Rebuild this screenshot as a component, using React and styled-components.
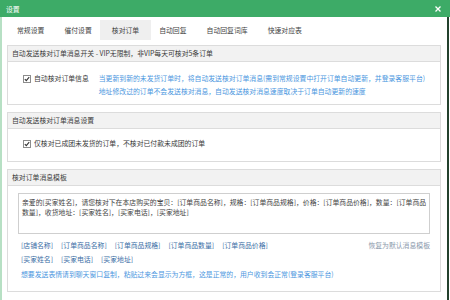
import styled, { createGlobalStyle } from "styled-components";

const GlobalStyle = createGlobalStyle`
  html, body {
    margin: 0;
    padding: 0;
    background: #fff;
  }
  body {
    font-family: "Noto Sans CJK SC", "Noto Sans", sans-serif;
  }
`;

const Window = styled.div`
  width: 450px;
  height: 300px;
  overflow: hidden;
  background: #fff;
  font-size: 6.85px;
  color: #3a3a3a;
`;

const TitleBar = styled.div`
  height: 17px;
  background: #3dab67;
  color: #fff;
  display: flex;
  align-items: center;
  justify-content: space-between;
  padding: 0 9px 0 6px;
`;

const Frame = styled.div`
  height: 283px;
  margin-right: 1px;
  border-left: 2px solid #b7e0c4;
  border-right: 2px solid #23412d;
`;

const TabBar = styled.div`
  height: 25px;
  display: flex;
  align-items: center;
  padding-left: 5px;
`;

const Tab = styled.div`
  height: 20px;
  display: flex;
  align-items: center;
  padding: 0 ${(p) => (p.$active ? "12px" : "10px")};
  margin: ${(p) => (p.$active ? "0 -2px" : "0")};
  background: ${(p) => (p.$active ? "#efefef" : "transparent")};
  color: #444;
`;

const Content = styled.div`
  padding: 3px 6px 0 5px;
`;

const Section = styled.section`
  border: 1px solid #dcdcdc;
  & + & {
    margin-top: 7px;
  }
`;

const SectionHeader = styled.div`
  height: 15px;
  line-height: 15px;
  background: #f2f2f2;
  border-bottom: 1px solid #dcdcdc;
  padding-left: 4px;
`;

const SectionBody = styled.div`
  padding: ${(p) => p.$pad};
`;

const Row = styled.div`
  display: flex;
  align-items: flex-start;
  line-height: 13px;
`;

const CheckLabel = styled.label`
  display: flex;
  align-items: center;
  gap: 3px;
  height: 13px;
  white-space: nowrap;
`;

const Hint = styled.div`
  color: #4c97e0;
  line-height: 13px;
  white-space: nowrap;
  margin-left: ${(p) => p.$indent || 0}px;
  padding-left: ${(p) => p.$pad || 0}px;
  margin-top: ${(p) => p.$top || 0}px;
`;

const TemplateBox = styled.div`
  box-sizing: content-box;
  height: 35px;
  border: 1px solid #cfcfcf;
  padding: 4px 3px 0;
  line-height: 9.5px;
  color: #444;
  white-space: nowrap;
  overflow: hidden;
`;

const Tokens = styled.div`
  display: flex;
  gap: 8px;
  padding-left: 3px;
  line-height: 14px;
  margin-top: ${(p) => p.$top || 0}px;
`;

const Token = styled.span`
  color: #3a6ea5;
  white-space: nowrap;
`;

const ResetLink = styled.span`
  margin-left: auto;
  color: #8a98ab;
  white-space: nowrap;
`;

function CheckBox() {
  return (
    <svg width="8" height="8" viewBox="0 0 8 8">
      <rect x="0.5" y="0.5" width="7" height="7" fill="#fff" stroke="#8c8c8c" />
      <path d="M1.8 4.1 L3.3 5.6 L6.2 2.2" fill="none" stroke="#333" strokeWidth="1.1" />
    </svg>
  );
}

function CloseIcon() {
  return (
    <svg width="6" height="6" viewBox="0 0 6 6">
      <path d="M0.5 0.5 L5.5 5.5 M5.5 0.5 L0.5 5.5" stroke="#fff" strokeWidth="1.3" />
    </svg>
  );
}

const tabs = ["常规设置", "催付设置", "核对订单", "自动回复", "自动回复词库", "快速对应表"];

export default function App() {
  return (
    <>
      <GlobalStyle />
      <Window>
        <TitleBar>
          <span>设置</span>
          <CloseIcon />
        </TitleBar>
        <Frame>
          <TabBar>
            {tabs.map((t) => (
              <Tab key={t} $active={t === "核对订单"}>
                {t}
              </Tab>
            ))}
          </TabBar>
          <Content>
            <Section>
              <SectionHeader>
                自动发送核对订单消息开关 - VIP无限制，非VIP每天可核对5条订单
              </SectionHeader>
              <SectionBody $pad="10px 0 6px 15px">
                <Row>
                  <CheckLabel>
                    <CheckBox />
                    自动核对订单信息
                  </CheckLabel>
                  <div>
                    <Hint $indent={10}>
                      当更新到新的未发货订单时，将自动发送核对订单消息(需到常规设置中打开订单自动更新，并登录客服平台)
                    </Hint>
                    <Hint $indent={10}>
                      地址修改过的订单不会发送核对消息，自动发送核对消息速度取决于订单自动更新的速度
                    </Hint>
                  </div>
                </Row>
              </SectionBody>
            </Section>

            <Section>
              <SectionHeader>自动发送核对订单消息设置</SectionHeader>
              <SectionBody $pad="8px 0 11px 15px">
                <Row>
                  <CheckLabel>
                    <CheckBox />
                    仅核对已成团未发货的订单，不核对已付款未成团的订单
                  </CheckLabel>
                </Row>
              </SectionBody>
            </Section>

            <Section>
              <SectionHeader>核对订单消息模板</SectionHeader>
              <SectionBody $pad="7px 10px 10px 10px">
                <TemplateBox>
                  亲爱的[买家姓名]，请您核对下在本店购买的宝贝：[订单商品名称]，规格：[订单商品规格]，价格：[订单商品价格]，数量：[订单商品
                  <br />
                  数量]，收货地址：[买家姓名]，[买家电话]，[买家地址]
                </TemplateBox>
                <Tokens $top={4}>
                  <Token>[店铺名称]</Token>
                  <Token>[订单商品名称]</Token>
                  <Token>[订单商品规格]</Token>
                  <Token>[订单商品数量]</Token>
                  <Token>[订单商品价格]</Token>
                  <ResetLink>恢复为默认消息模板</ResetLink>
                </Tokens>
                <Tokens>
                  <Token>[买家姓名]</Token>
                  <Token>[买家电话]</Token>
                  <Token>[买家地址]</Token>
                </Tokens>
                <Hint $pad={3} $top={2}>
                  想要发送表情请到聊天窗口复制，粘贴过来会显示为方框，这是正常的，用户收到会正常(登录客服平台)
                </Hint>
              </SectionBody>
            </Section>
          </Content>
        </Frame>
      </Window>
    </>
  );
}
